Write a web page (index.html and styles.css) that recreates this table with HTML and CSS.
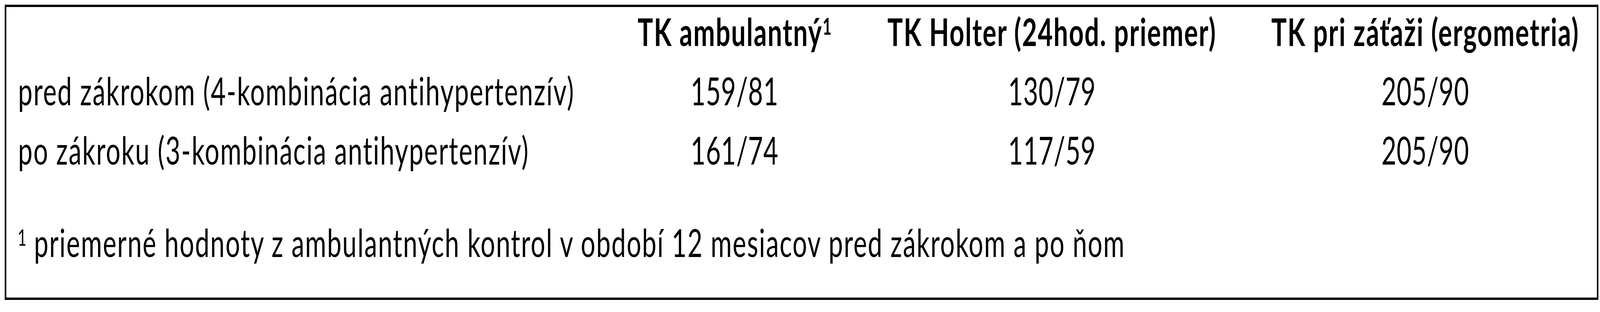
FILE: index.html
```html
<!DOCTYPE html>
<html lang="sk">
<head>
<meta charset="utf-8">
<title>TK tabuľka</title>
<link rel="stylesheet" href="styles.css">
</head>
<body>
<div class="page">
  <div class="box">
    <div class="grid">
      <div class="cell label"></div>
      <div class="cell head">TK ambulantný<sup class="sup">1</sup></div>
      <div class="cell head">TK Holter (24hod. priemer)</div>
      <div class="cell head">TK pri záťaži (ergometria)</div>

      <div class="cell label">pred zákrokom (4-kombinácia antihypertenzív)</div>
      <div class="cell val">159/81</div>
      <div class="cell val">130/79</div>
      <div class="cell val">205/90</div>

      <div class="cell label">po zákroku (3-kombinácia antihypertenzív)</div>
      <div class="cell val">161/74</div>
      <div class="cell val">117/59</div>
      <div class="cell val">205/90</div>

      <div class="cell note"><sup class="sup">1</sup> priemerné hodnoty z ambulantných kontrol v období 12 mesiacov pred zákrokom a po ňom</div>
    </div>
  </div>
</div>
</body>
</html>
```

FILE: styles.css
```css
html, body {
  margin: 0;
  padding: 0;
  background: #ffffff;
  overflow: hidden;
}

body {
  font-family: Lato, "Open Sans", "Liberation Sans", sans-serif;
  color: #000000;
}

/* The layout is authored on a 6099px-wide canvas and fitted to the real viewport width */
.page {
  width: 6099px;
  height: 800px;
  box-sizing: border-box;
  padding: 12px 0 0 18px;
  transform-origin: 0 0;
  transform: scaleX(0.671586);
  transform: scaleX(tan(atan2(100vw, 6099px)));
}

.box {
  width: 6075px;
  height: 757px;
  box-sizing: border-box;
  border: 6px solid #000000;
  padding: 3px 0 0 0;
}

.grid {
  display: grid;
  grid-template-columns: 2335px 882px 1538px 1308px;
  row-gap: 34px;
}

.cell {
  font-size: 98px;
  line-height: 118px;
  letter-spacing: 3.2px;
  white-space: nowrap;
}

.label {
  padding-left: 45px;
}

.head {
  font-weight: 700;
  text-align: center;
}

.val {
  text-align: center;
  letter-spacing: 1px;
}

.note {
  grid-column: 1 / -1;
  padding-left: 43px;
  margin-top: 85px;
}

.sup {
  font-size: 0.6em;
  line-height: 0;
  letter-spacing: 0;
  vertical-align: 0.5em;
}
```
